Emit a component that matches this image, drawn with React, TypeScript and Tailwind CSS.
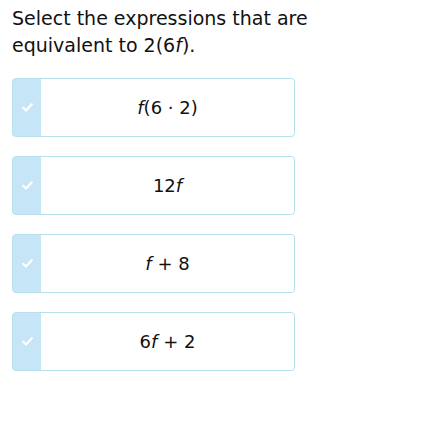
import React from "react";

const font = { fontFamily: '"DejaVu Sans", Verdana, sans-serif' };

function Check() {
  return (
    <svg width="11" height="9" viewBox="0 0 11 9" fill="none">
      <path d="M1.2 4.8 L4 7.4 L9.8 1.2" stroke="white" strokeWidth="2.2" strokeLinecap="round" strokeLinejoin="round" />
    </svg>
  );
}

function Card({ children }: { children: React.ReactNode }) {
  return (
    <div className="flex h-[59px] w-[283px] rounded-[4px] border border-[#b6e0eb] bg-[#c6e6f8] overflow-hidden">
      <div className="flex w-[28px] items-center justify-center">
        <Check />
      </div>
      <div className="flex flex-1 items-center justify-center bg-white text-[18px] text-[#111]">
        {children}
      </div>
    </div>
  );
}

export default function App() {
  return (
    <div className="h-[422px] w-[422px] bg-white" style={font}>
      <div className="px-[12px] pt-[5px] text-[19px] leading-[27px] text-[#111]">
        Select the expressions that are
        <br />
        equivalent to 2(6<i>f</i>).
      </div>
      <div className="mt-[19px] flex flex-col gap-[19px] pl-[12px]">
        <Card>
          <span><i>f</i>(6 · 2)</span>
        </Card>
        <Card>
          <span>12<i>f</i></span>
        </Card>
        <Card>
          <span><i>f</i> + 8</span>
        </Card>
        <Card>
          <span>6<i>f</i> + 2</span>
        </Card>
      </div>
    </div>
  );
}
